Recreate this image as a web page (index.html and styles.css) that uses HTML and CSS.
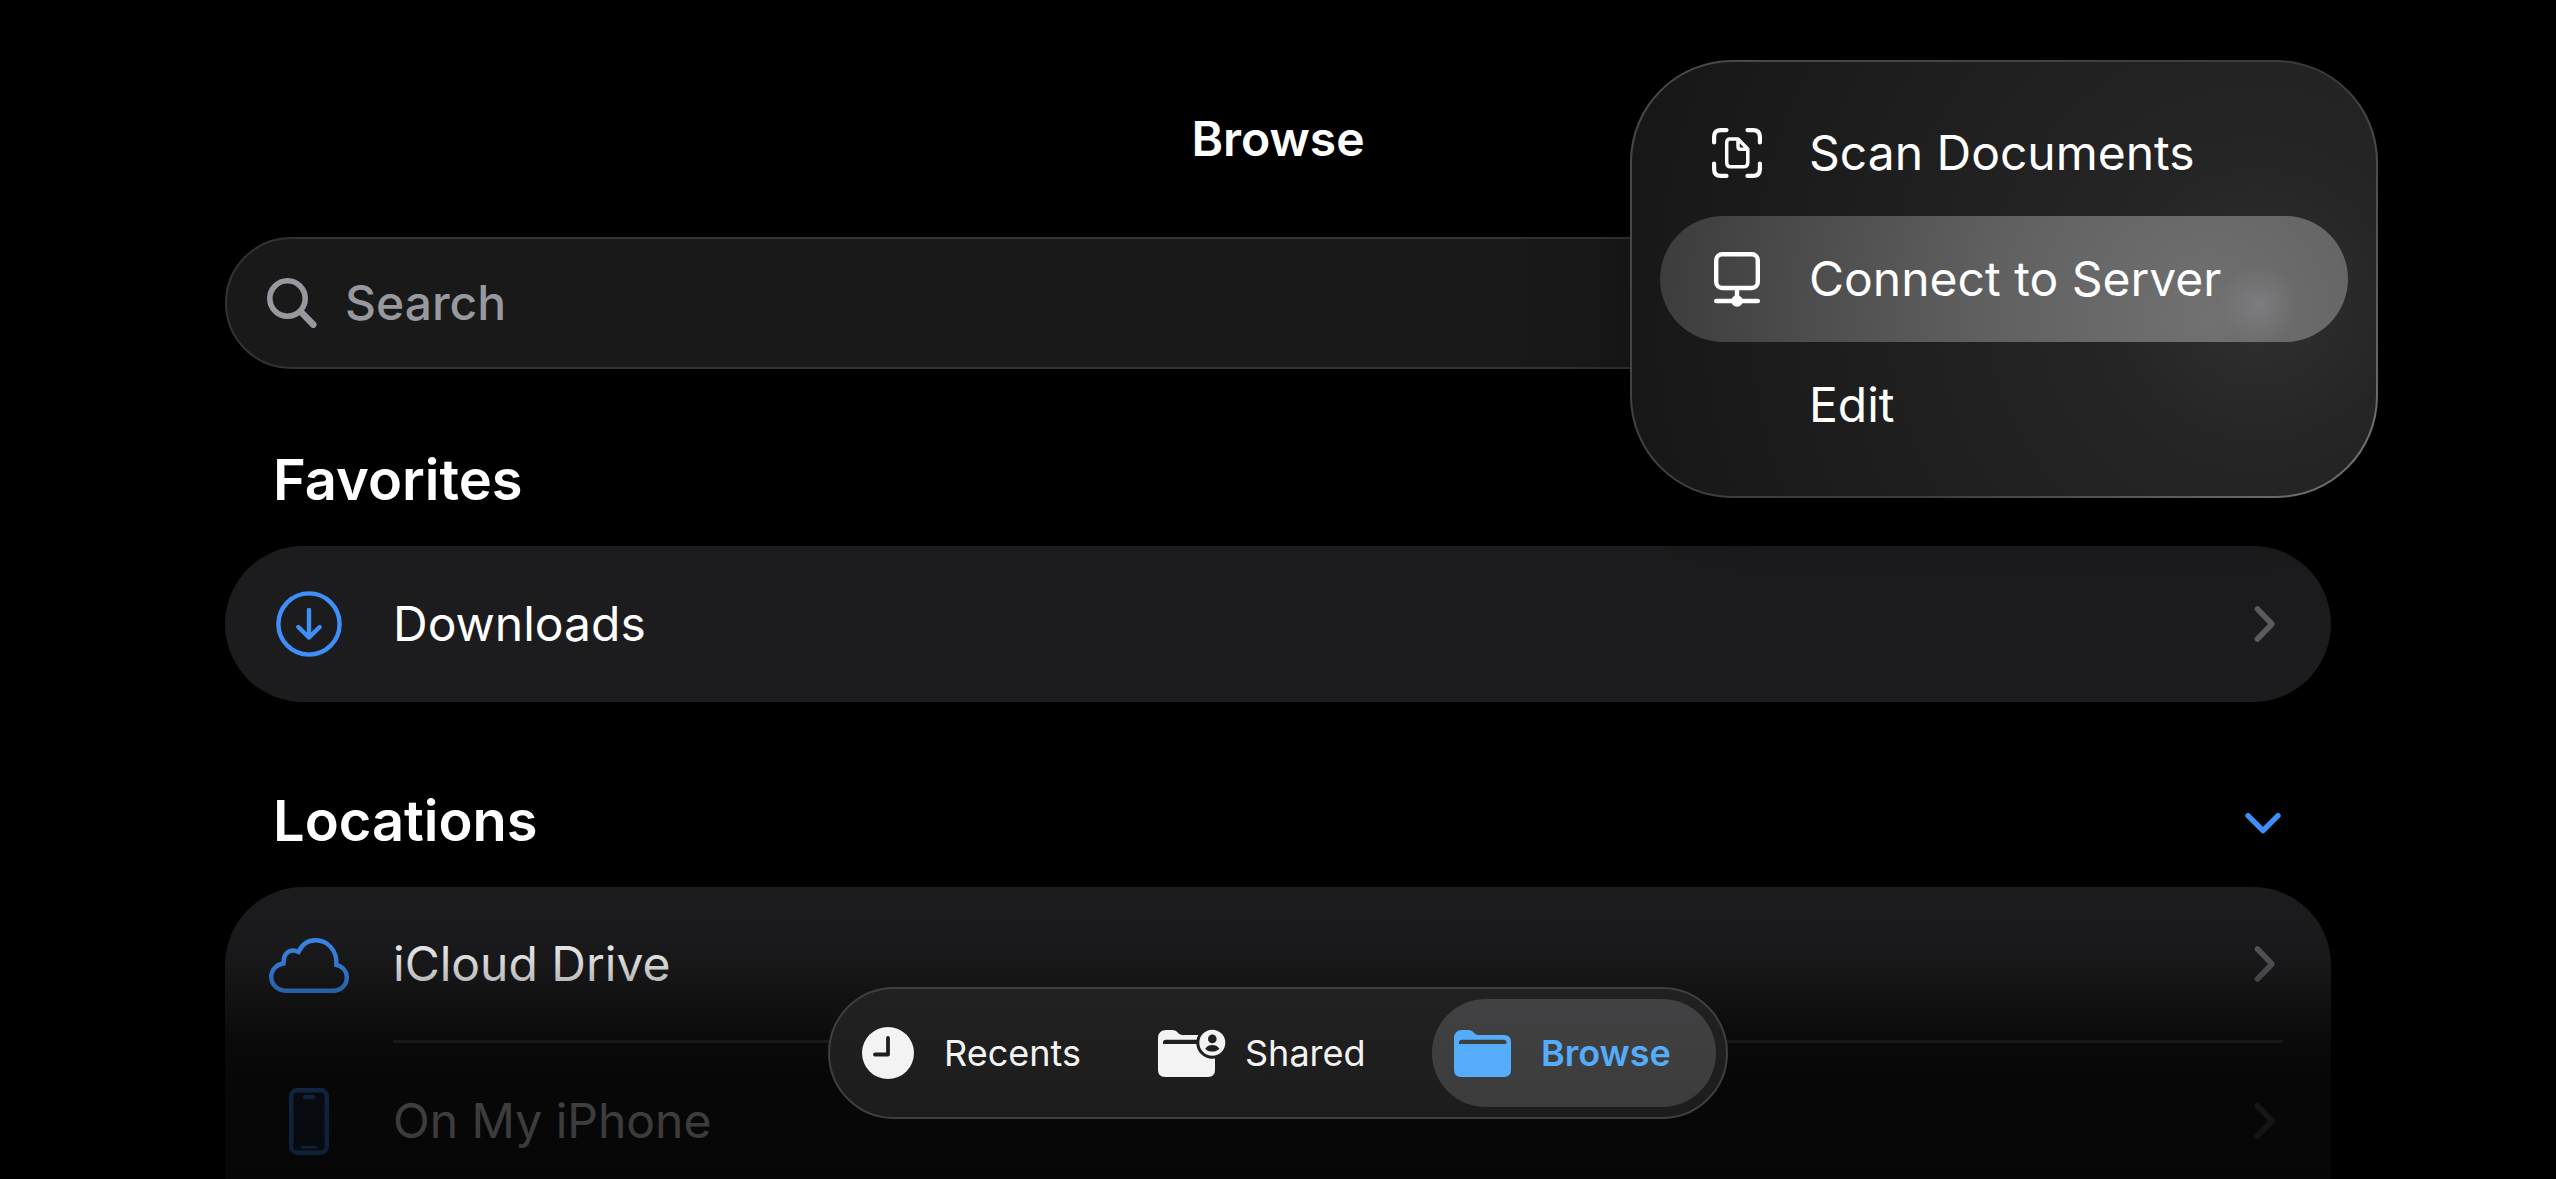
FILE: index.html
```html
<!DOCTYPE html>
<html lang="en">
<head>
    <meta charset="UTF-8">
    <meta name="viewport" content="width=device-width, initial-scale=1.0">
    <title>Browse</title>
    <link rel="stylesheet" href="styles.css">
</head>
<body>
    <main class="browse">
        <h1 class="title">Browse</h1>

        <label class="search">
            <svg width="50" height="50" viewBox="0 0 50 50" fill="none" stroke="currentColor" stroke-linecap="round" aria-hidden="true">
                <circle cx="20.5" cy="20.5" r="17.7" stroke-width="5.6"/>
                <path d="M34 34 46.3 46.6" stroke-width="6.6"/>
            </svg>
            <input type="search" placeholder="Search" aria-label="Search">
        </label>

        <section class="group">
            <div class="group-header">
                <h2>Favorites</h2>
            </div>
            <ul class="card">
                <li>
                    <a class="row" href="#downloads">
                        <span class="row-icon">
                            <svg width="66" height="66" viewBox="0 0 66 66" fill="none" stroke="currentColor" stroke-width="4.4" stroke-linecap="round" stroke-linejoin="round" aria-hidden="true">
                                <circle cx="33" cy="33" r="30.6"/>
                                <path d="M33 19V46.5M22.3 36 33 46.5 43.7 36"/>
                            </svg>
                        </span>
                        <span class="row-body">Downloads
                            <svg class="chevron" width="36" height="42" viewBox="0 0 36 42" aria-hidden="true"><path d="M10.4 6 25 21 10.4 36"/></svg>
                        </span>
                    </a>
                </li>
            </ul>
        </section>

        <section class="group">
            <div class="group-header">
                <h2>Locations</h2>
                <button class="toggle" aria-label="Collapse Locations">
                    <svg width="36" height="36" viewBox="0 0 36 36" fill="none" stroke="currentColor" stroke-width="5.4" stroke-linecap="round" stroke-linejoin="round"><path d="M3 12.7 18 27.7 33 12.7"/></svg>
                </button>
            </div>
            <ul class="card locations">
                <li>
                    <a class="row" href="#icloud">
                        <span class="row-icon">
                            <svg width="80" height="55" viewBox="0 0 80 55" fill="none" stroke="currentColor" stroke-width="4.4" aria-hidden="true">
                                <path d="M17 52.7C8.5 52.7 2.2 46.6 2.2 38.8C2.2 32 7.5 26.3 14.5 25.5C14.3 14.5 21.5 10 29.6 13.9C33 6.5 39 2.3 46.5 2.3C59 2.3 68.5 13 67.3 26.8C74 28.5 77.8 33.5 77.8 39.5C77.8 47 72 52.7 64.5 52.7Z"/>
                            </svg>
                        </span>
                        <span class="row-body">iCloud Drive
                            <svg class="chevron" width="36" height="42" viewBox="0 0 36 42" aria-hidden="true"><path d="M10.4 6 25 21 10.4 36"/></svg>
                        </span>
                    </a>
                </li>
                <li>
                    <a class="row" href="#iphone">
                        <span class="row-icon">
                            <svg width="40" height="67" viewBox="0 0 40 67" aria-hidden="true">
                                <rect x="2.2" y="2.2" width="35.6" height="62.6" rx="6" fill="currentColor" fill-opacity="0.15" stroke="currentColor" stroke-width="4.4"/>
                                <rect x="14" y="7" width="12" height="4" rx="2" fill="currentColor"/>
                                <rect x="12" y="58" width="16" height="2.6" rx="1.3" fill="currentColor"/>
                            </svg>
                        </span>
                        <span class="row-body">On My iPhone
                            <svg class="chevron" width="36" height="42" viewBox="0 0 36 42" aria-hidden="true"><path d="M10.4 6 25 21 10.4 36"/></svg>
                        </span>
                    </a>
                </li>
            </ul>
        </section>
    </main>

    <div class="fade"></div>

    <nav class="tabs">
        <a class="tab" href="#recents">
            <svg width="52" height="52" viewBox="0 0 52 52" aria-hidden="true">
                <circle cx="26" cy="26" r="26" fill="currentColor"/>
                <path class="cut-line" d="M26 11V27.5H13"/>
            </svg>
            Recents
        </a>
        <a class="tab" href="#shared">
            <svg class="folder" width="57" height="47" viewBox="0 0 57 47" aria-hidden="true">
                <path fill="currentColor" fill-rule="evenodd" d="M0 8.5C0 3 3 0 8.5 0H14C20 0 19.5 5 25 5H50Q57 5 57 12V40Q57 47 50 47H7Q0 47 0 40ZM5 14V12.5Q5 9.7 8 9.7H49.5Q52.5 9.7 52.5 12.5V14Z"/>
                <circle class="cut" cx="54.3" cy="12.7" r="16"/>
                <circle cx="54.3" cy="12.7" r="13" fill="currentColor"/>
                <circle class="cut" cx="54.3" cy="8.9" r="4.3"/>
                <path class="cut" d="M47.2 18.7C49 15.9 51.5 15 54.3 15S59.6 15.9 61.4 18.7C59.5 20.7 57 21.5 54.3 21.5S49.1 20.7 47.2 18.7Z"/>
            </svg>
            Shared
        </a>
        <a class="tab active" href="#browse" aria-current="page">
            <svg width="57" height="47" viewBox="0 0 57 47" aria-hidden="true">
                <path fill="currentColor" fill-rule="evenodd" d="M0 8.5C0 3 3 0 8.5 0H14C20 0 19.5 5 25 5H50Q57 5 57 12V40Q57 47 50 47H7Q0 47 0 40ZM5 14V12.5Q5 9.7 8 9.7H49.5Q52.5 9.7 52.5 12.5V14Z"/>
            </svg>
            Browse
        </a>
    </nav>

    <div class="menu" role="menu">
        <button class="menu-item" role="menuitem">
            <span class="menu-icon">
                <svg width="50" height="50" viewBox="0 0 50 50" fill="none" stroke="currentColor" stroke-width="4.2" stroke-linecap="round" stroke-linejoin="round" aria-hidden="true">
                    <path d="M2.1 14.5V9Q2.1 2.1 9 2.1H14.5M35.500 2.100H41Q47.900 2.100 47.900 9V14.500M47.900 35.500V41Q47.900 47.900 41 47.900H35.500M14.500 47.900H9Q2.100 47.900 2.100 41V35.500"/>
                    <path d="M18 11H26L35.800 21V34.500Q35.800 38.800 31.500 38.800H18.500Q14.700 38.800 14.700 34.500V15Q14.700 11 18 11ZM26 11.500V18.500Q26 21.300 28.500 21.300H35.500" stroke-width="3.500"/>
                </svg>
            </span>
            Scan Documents
        </button>
        <button class="menu-item highlighted" role="menuitem">
            <span class="menu-icon">
                <svg width="46" height="55" viewBox="0 0 46 55" fill="none" stroke="currentColor" stroke-width="4.4" stroke-linecap="round" aria-hidden="true">
                    <rect x="2.2" y="2.2" width="41.6" height="33.8" rx="6"/>
                    <path d="M23 37V49M2.2 49H43.8"/>
                    <circle cx="23" cy="49" r="5.8" fill="currentColor" stroke="none"/>
                </svg>
            </span>
            Connect to Server
        </button>
        <button class="menu-item" role="menuitem">
            <span class="menu-icon"></span>
            Edit
        </button>
    </div>
</body>
</html>
```
FILE: styles.css
```css
* {
    box-sizing: border-box;
}
body {
    position: relative;
    height: 100vh;
    margin: 0;
    overflow: hidden;
    background-color: #000;
    color: #fff;
    font-family: Inter, "Liberation Sans", sans-serif;
    font-size: 48px;
    line-height: 60px;
}
h1, h2, ul {
    margin: 0;
    padding: 0;
    list-style: none;
}
a {
    color: inherit;
    text-decoration: none;
}
button {
    padding: 0;
    border: none;
    background: none;
    color: inherit;
    font: inherit;
    cursor: pointer;
}
svg {
    display: block;
    flex: none;
}
.browse {
    height: 100%;
    padding: 109px 225px 0;
    overflow: hidden;
}
.title {
    font-size: 48px;
    font-weight: 600;
    text-align: center;
}
.search {
    display: flex;
    align-items: center;
    gap: 28px;
    height: 132px;
    margin-top: 68px;
    padding: 0 40px;
    border: 2px solid #333;
    border-radius: 66px;
    background-color: #191919;
    color: #98989f;
}
.search input {
    flex: 1;
    padding: 0;
    border: none;
    outline: none;
    background: none;
    color: #fff;
    font: inherit;
    font-weight: 500;
}
.search input::placeholder {
    color: #98989f;
    opacity: 1;
}

/* grouped lists */
.group {
    margin-top: 75px;
}
.group + .group {
    margin-top: 83px;
}
.group-header {
    display: flex;
    align-items: center;
    justify-content: space-between;
    padding: 0 50px 0 48px;
}
.group h2 {
    font-size: 56px;
    font-weight: 600;
    line-height: 72px;
}
.toggle {
    color: #3e8ff8;
}
.card {
    margin-top: 30px;
    border-radius: 78px;
    background-color: #1c1c1e;
}
.locations {
    border-bottom-left-radius: 0;
    border-bottom-right-radius: 0;
}
.row {
    display: flex;
    align-items: stretch;
    padding-right: 48px;
}
.row-icon {
    display: flex;
    flex: none;
    align-items: center;
    justify-content: center;
    width: 168px;
    color: #3e8ff8;
}
.row-body {
    display: flex;
    flex: 1;
    align-items: center;
    justify-content: space-between;
    height: 156px;
}
li:not(:last-child) .row-body {
    border-bottom: 3px solid #424245;
}
.chevron {
    fill: none;
    stroke: #5b5b60;
    stroke-width: 5.5px;
    stroke-linecap: round;
    stroke-linejoin: round;
}

/* content dims out behind the tab bar */
.fade {
    position: absolute;
    right: 0;
    bottom: 0;
    left: 0;
    height: 300px;
    background: linear-gradient(rgba(0, 0, 0, 0), rgba(0, 0, 0, .06) 17%, rgba(0, 0, 0, .15) 27%, rgba(0, 0, 0, .29) 35%, rgba(0, 0, 0, .46) 45%, rgba(0, 0, 0, .63) 54%, rgba(0, 0, 0, .73) 64%, rgba(0, 0, 0, .76) 77%, rgba(0, 0, 0, .78));
    pointer-events: none;
}

.tabs {
    position: absolute;
    bottom: 60px;
    left: 50%;
    display: flex;
    gap: 12px;
    height: 132px;
    padding: 10px;
    border: 2px solid #3f3f41;
    border-radius: 66px;
    background: linear-gradient(#212122, #1c1c1c);
    color: #f3f3f3;
    font-size: 36px;
    transform: translateX(-50%);
}
.tab {
    display: flex;
    align-items: center;
    gap: 30px;
    width: 284px;
    padding: 0 22px;
    border-radius: 54px;
}
.tab.active {
    background: linear-gradient(#414143, #3c3c3c);
    color: #54acfa;
    font-weight: 600;
}
.folder {
    overflow: visible;
}
.cut {
    fill: #1f1f20;
}
.cut-line {
    fill: none;
    stroke: #1f1f20;
    stroke-width: 3.8px;
    stroke-linecap: round;
    stroke-linejoin: round;
}

.menu {
    position: absolute;
    top: 60px;
    right: 178px;
    display: flex;
    flex-direction: column;
    width: 748px;
    padding: 28px;
    border: 2px solid transparent;
    border-radius: 102px;
    background:
        radial-gradient(circle at 84% 56%, #303030, #252525 22%, #202020 50%, #161616) padding-box,
        linear-gradient(135deg, #4a4a4a, #3a3a3a 60%, #777) border-box;
    box-shadow: 0 20px 100px rgba(0, 0, 0, .3);
}
.menu-item {
    display: flex;
    align-items: center;
    height: 126px;
    border-radius: 63px;
}
.menu-icon {
    display: flex;
    flex: none;
    justify-content: center;
    width: 149px;
    padding-left: 4px;
}
.menu-item.highlighted {
    background:
        radial-gradient(circle at 87% 70%, rgba(130, 130, 135, .7), rgba(130, 130, 135, 0) 40px),
        radial-gradient(circle at 80% 80%, #717171, #606060 40%, #3c3c3c);
}
```
